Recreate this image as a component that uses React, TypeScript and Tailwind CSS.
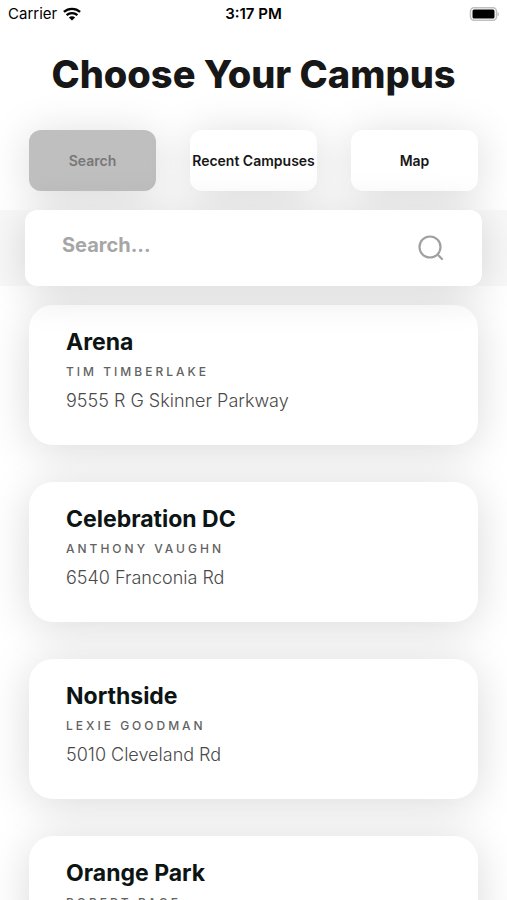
import clsx from "clsx";

type Campus = {
  name: string;
  pastor: string;
  address: string;
};

const tabs = ["Search", "Recent Campuses", "Map"];

const campuses: Campus[] = [
  { name: "Arena", pastor: "Tim Timberlake", address: "9555 R G Skinner Parkway" },
  { name: "Celebration DC", pastor: "Anthony Vaughn", address: "6540 Franconia Rd" },
  { name: "Northside", pastor: "Lexie Goodman", address: "5010 Cleveland Rd" },
  { name: "Orange Park", pastor: "Robert Page", address: "" },
];

const StatusBar = () => (
  <div className="grid h-7 grid-cols-3 items-center px-2 text-[15px] leading-5 text-black">
    <div className="flex items-center gap-1.5">
      <span>Carrier</span>
      <svg viewBox="0 0 20 15" className="h-[14px] w-[18px]" aria-hidden="true">
        <path d="M1 5.2C6 .6 14 .6 19 5.2" fill="none" stroke="black" strokeWidth="2.6" />
        <path d="M4 8.8C7.4 5.8 12.6 5.8 16 8.8" fill="none" stroke="black" strokeWidth="2.6" />
        <path d="M10 14.8 6.5 11.4a5 5 0 0 1 7 0z" fill="black" />
      </svg>
    </div>
    <span className="text-center font-semibold">3:17 PM</span>
    <svg viewBox="0 0 30 14" className="h-[14px] w-[30px] justify-self-end" aria-hidden="true">
      <rect x="1.5" y="0.75" width="26" height="12.5" rx="3.5" fill="white" stroke="#c0c0c0" strokeWidth="1.5" />
      <rect x="3.5" y="2.5" width="22" height="9" rx="1.5" fill="black" />
      <path d="M28.6 5v4.4c1.6-.8 1.6-3.6 0-4.4z" fill="#b0b0b0" />
    </svg>
  </div>
);

const CampusCard = ({ campus }: { campus: Campus }) => (
  <li className="h-[140px] shrink-0 rounded-3xl bg-white px-[37px] pt-[22px] shadow-[0_5px_44px_rgba(0,0,0,0.15)]">
    <h2 className="text-[23px] leading-[30px] font-bold text-[#0c1414]">{campus.name}</h2>
    <p className="text-[12px] leading-[30px] font-medium tracking-[3px] text-[#626262] uppercase">{campus.pastor}</p>
    <p className="text-[18px] leading-7 font-light text-[#4a4a4a]">{campus.address}</p>
  </li>
);

export default function App() {
  return (
    <div className="flex h-screen flex-col overflow-hidden bg-white font-['Inter',sans-serif]">
      <StatusBar />

      <h1 className="pt-6 text-center text-[38px] leading-[44px] font-extrabold text-[#171717]">Choose Your Campus</h1>

      <div className="mt-[34px] grid grid-cols-3 gap-[34px] px-[29px]">
        {tabs.map((tab, i) => (
          <button
            key={tab}
            type="button"
            className={clsx(
              "h-[61px] rounded-xl text-[14px] font-semibold whitespace-nowrap shadow-[0_5px_44px_rgba(0,0,0,0.15)]",
              i === 0 ? "bg-[#bfbfbf] text-[#777777]" : "bg-white text-[#171717]",
            )}
          >
            {tab}
          </button>
        ))}
      </div>

      <div className="relative z-10 mt-[19px] bg-[#f8f8f8] px-[25px]">
        <label className="flex h-[76px] items-center rounded-xl bg-white px-[37px] shadow-[0_5px_44px_rgba(0,0,0,0.15)]">
          <input
            type="text"
            aria-label="Search campuses"
            placeholder="Search..."
            className="min-w-0 flex-1 pb-1.5 text-[20px] font-bold outline-none placeholder:text-[#a6a6a6]"
          />
          <svg viewBox="0 0 28 28" className="size-7" fill="none" stroke="#a0a0a0" strokeWidth="2.2" aria-hidden="true">
            <circle cx="13" cy="13" r="10.5" />
            <path d="m20.500 20.500 4.500 4.500" strokeLinecap="round" />
          </svg>
        </label>
      </div>

      <ul className="flex flex-1 flex-col gap-[37px] overflow-y-auto px-[29px] pt-[19px] [scrollbar-width:none]">
        {campuses.map((campus) => (
          <CampusCard key={campus.name} campus={campus} />
        ))}
      </ul>
    </div>
  );
}
